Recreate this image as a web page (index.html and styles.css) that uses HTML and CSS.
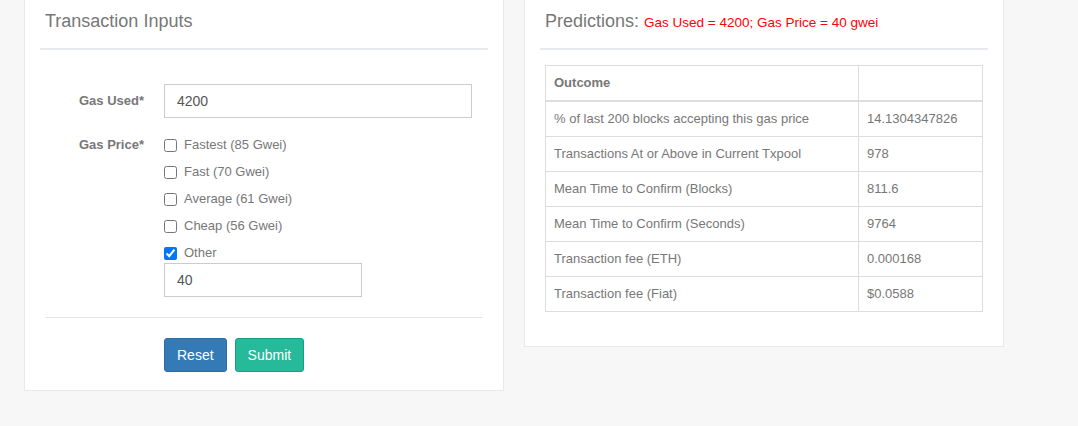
FILE: index.html
```html
<!DOCTYPE html>
<html>
<head>
    <title>Gas Price Predictions</title>
    <link rel="stylesheet" href="styles.css">
</head>
<body>
    <div class="row">
        <!-- Inputs -->
        <div class="x-panel">
            <div class="x-title">
                <h2>Transaction Inputs</h2>
            </div>
            <div class="x-content">
                <form class="tx-form" onsubmit="return false;">
                    <div class="form-group">
                        <label class="control-label label-input">Gas Used*</label>
                        <input type="text" class="form-control gas-used" value="4200">
                    </div>
                    <div class="form-group group-price">
                        <label class="control-label">Gas Price*</label>
                        <div class="price-options">
                            <label class="check-row"><input type="checkbox"> Fastest (85 Gwei)</label>
                            <label class="check-row"><input type="checkbox"> Fast (70 Gwei)</label>
                            <label class="check-row"><input type="checkbox"> Average (61 Gwei)</label>
                            <label class="check-row"><input type="checkbox"> Cheap (56 Gwei)</label>
                            <label class="check-row"><input type="checkbox" checked> Other</label>
                            <input type="text" class="form-control gas-other" value="40">
                        </div>
                    </div>
                    <div class="ln-solid"></div>
                    <div class="form-actions">
                        <button type="reset" class="btn btn-primary">Reset</button>
                        <button type="submit" class="btn btn-success">Submit</button>
                    </div>
                </form>
            </div>
        </div>

        <!-- Predictions -->
        <div class="x-panel">
            <div class="x-title">
                <h2>Predictions: <small class="summary">Gas Used = 4200; Gas Price = 40 gwei</small></h2>
            </div>
            <div class="x-content">
                <table class="table">
                    <colgroup>
                        <col class="col-label">
                        <col>
                    </colgroup>
                    <thead>
                        <tr><th>Outcome</th><th></th></tr>
                    </thead>
                    <tbody>
                        <tr><td>% of last 200 blocks accepting this gas price</td><td>14.1304347826</td></tr>
                        <tr><td>Transactions At or Above in Current Txpool</td><td>978</td></tr>
                        <tr><td>Mean Time to Confirm (Blocks)</td><td>811.6</td></tr>
                        <tr><td>Mean Time to Confirm (Seconds)</td><td>9764</td></tr>
                        <tr><td>Transaction fee (ETH)</td><td>0.000168</td></tr>
                        <tr><td>Transaction fee (Fiat)</td><td>$0.0588</td></tr>
                    </tbody>
                </table>
            </div>
        </div>
    </div>
</body>
</html>
```

FILE: styles.css
```css
* {
    box-sizing: border-box;
}

body {
    margin: 0;
    background: #F7F7F7;
    font-family: "Liberation Sans", Arial, sans-serif;
    font-size: 13px;
    color: #777;
}

.row {
    display: flex;
    align-items: flex-start;
    gap: 20px;
    padding-left: 24px;
    margin-top: -6px; /* page is scrolled a little */
}

.x-panel {
    width: 480px;
    background: #fff;
    border: 1px solid #E6E9ED;
    padding: 10px 15px;
}

.x-title {
    padding: 1px 5px 17px;
    border-bottom: 2px solid #E6E9ED;
    margin-bottom: 15px;
}

.x-title h2 {
    margin: 5px 0 0;
    font-size: 18px;
    font-weight: 400;
    line-height: 20px;
    white-space: nowrap;
}

.summary {
    font-size: 13.5px;
    line-height: 1;
    color: red;
}

.x-content {
    padding: 0 5px 6px;
}

/* form */
.tx-form {
    margin: 0;
    padding-top: 19px;
    padding-bottom: 2px;
}

.form-group {
    display: flex;
    align-items: flex-start;
    gap: 20px;
}

.group-price {
    margin-top: 17px;
}

.control-label {
    width: 99px;
    text-align: right;
    font-weight: bold;
    line-height: 20px;
}

.label-input {
    line-height: 34px;
}

.form-control {
    height: 34px;
    padding: 6px 12px;
    border: 1px solid #ccc;
    border-radius: 0;
    font-family: inherit;
    font-size: 14px;
    color: #555;
    background: #fff;
}

.gas-used {
    width: 308px;
}

.gas-other {
    width: 198px;
}

.price-options {
    display: flex;
    flex-direction: column;
    align-items: flex-start;
}

.check-row {
    display: flex;
    align-items: center;
    line-height: 20px;
    margin-bottom: 7px;
}

.check-row:nth-last-of-type(1) {
    margin-bottom: 0;
}

.check-row input {
    width: 13px;
    height: 13px;
    margin: 0 7px 0 0;
}

.ln-solid {
    border-top: 1px solid #e5e5e5;
    margin: 20px 0;
}

.form-actions {
    display: flex;
    gap: 8px;
    padding-left: 119px;
}

.btn {
    height: 34px;
    padding: 6px 12px;
    border: 1px solid transparent;
    border-radius: 3px;
    font-family: inherit;
    font-size: 14px;
    line-height: 20px;
    color: #fff;
    cursor: pointer;
}

.btn-primary {
    background: #337ab7;
    border-color: #2e6da4;
}

.btn-success {
    background: #26B99A;
    border-color: #169F85;
}

/* table */
.table {
    width: 100%;
    table-layout: fixed;
    border-collapse: collapse;
    margin-bottom: 18px;
}

.col-label {
    width: 313px;
}

.table th,
.table td {
    border: 1px solid #ddd;
    padding: 8px;
    line-height: 18px;
    text-align: left;
    font-size: 13px;
}

.table thead th {
    border-bottom: 2px solid #ddd;
}
```
